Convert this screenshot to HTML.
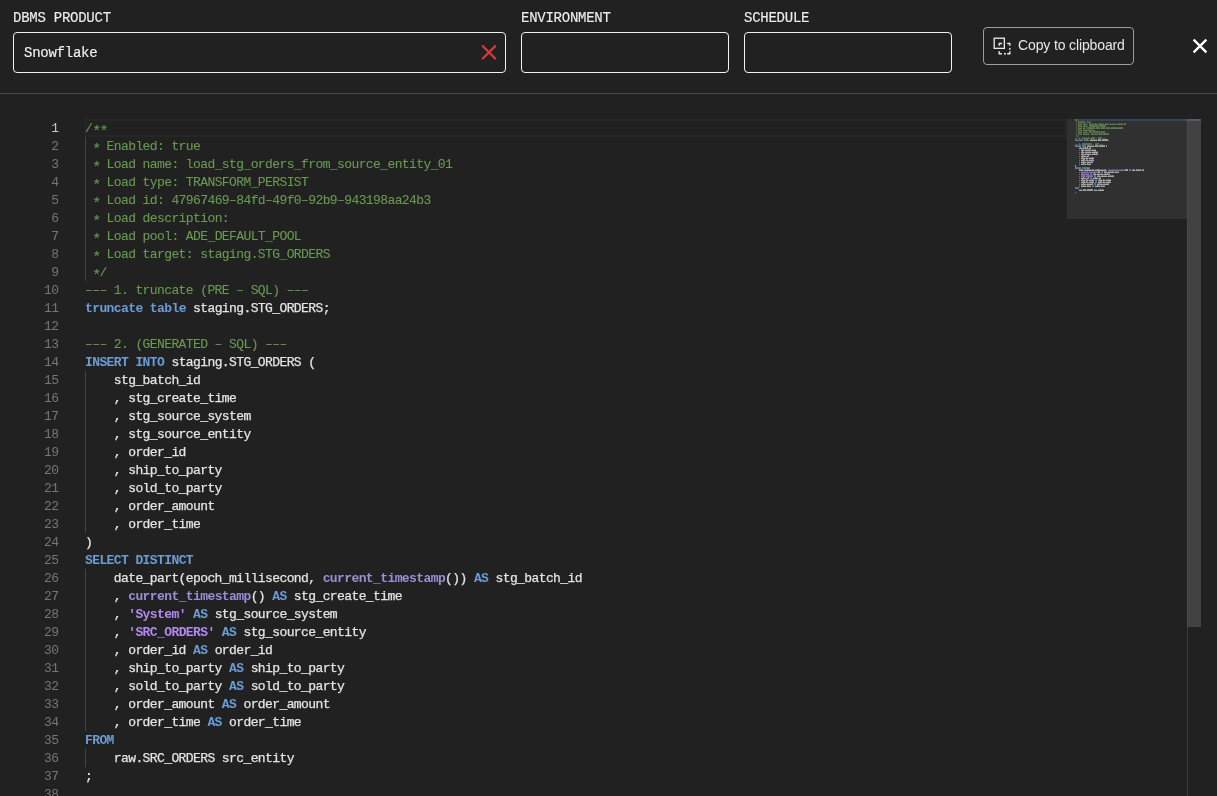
<!DOCTYPE html>
<html>
<head>
<meta charset="utf-8">
<style>
html,body{margin:0;padding:0;}
body{width:1217px;height:796px;overflow:hidden;background:#212121;position:relative;font-family:"Liberation Mono",monospace;}
.abs{position:absolute;}
.lbl{position:absolute;top:9px;font-size:14px;line-height:18px;color:#ececec;-webkit-text-stroke:0.15px currentColor;letter-spacing:-0.25px;white-space:pre;}
.inp{position:absolute;top:32px;height:41px;box-sizing:border-box;border:1.5px solid #f2f2f2;border-radius:4px;}
.val{position:absolute;left:24px;top:44px;font-size:14px;line-height:18px;color:#f2f2f2;-webkit-text-stroke:0.15px currentColor;white-space:pre;letter-spacing:-0.25px;}
.btn{position:absolute;left:983px;top:27px;width:151px;height:38px;box-sizing:border-box;border:1px solid #9d9d9d;border-radius:4px;}
.btxt{position:absolute;left:1018px;top:36px;font-family:"Liberation Sans",sans-serif;font-size:14px;line-height:18px;color:#e8e8e8;white-space:pre;letter-spacing:-0.13px;}
.sep{position:absolute;left:0;top:93px;width:1217px;height:1px;background:#4a4a4a;}
.ln{position:absolute;left:0;width:58.5px;text-align:right;font-size:13px;letter-spacing:-0.6px;line-height:18px;height:18px;color:#767676;}
.ln.cur{color:#c6c6c6;}
.cl{position:absolute;left:85px;-webkit-text-stroke:0.25px currentColor;font-size:13px;letter-spacing:-0.6px;line-height:18px;height:18px;white-space:pre;}
.c{color:#6a9955;-webkit-text-stroke:0.08px currentColor;}
.k{color:#6c9cd4;font-weight:bold;-webkit-text-stroke:0;}
.f{color:#9b8fd4;font-weight:bold;-webkit-text-stroke:0;}
.s{color:#b28af0;font-weight:bold;-webkit-text-stroke:0;}
.t{color:#e4e4e4;}
.ast{font-style:normal;font-size:15px;letter-spacing:-1.8px;position:relative;top:3.5px;line-height:0;}
.guide{position:absolute;left:85px;width:1px;background:#454545;}
.curline{position:absolute;left:85px;top:119px;width:982px;height:18px;box-sizing:border-box;border:2px solid #262626;}
.mmbg{position:absolute;left:1067px;top:119px;width:120px;height:100px;background:#303030;}
.mmcur{position:absolute;left:1075px;top:119px;width:112px;height:2px;background:#34455a;}
.sbline{position:absolute;left:1187px;top:119px;width:1px;height:677px;background:#3a3a3a;}
.sbedge{position:absolute;left:1187px;top:119px;width:1px;height:508px;background:#4a4a4a;}
.sbthumb{position:absolute;left:1188px;top:119px;width:13px;height:508px;background:#424242;}
.sbcur{position:absolute;left:1187px;top:119px;width:14px;height:2px;background:#5a5a5a;}
</style>
</head>
<body>
<div id="root" style="position:absolute;left:0;top:0;width:1217px;height:796px;will-change:transform">
<div class="lbl" style="left:13px">DBMS PRODUCT</div>
<div class="lbl" style="left:521px">ENVIRONMENT</div>
<div class="lbl" style="left:744px">SCHEDULE</div>
<div class="inp" style="left:13px;width:493px"></div>
<div class="val">Snowflake</div>
<svg class="abs" style="left:480px;top:44px" width="18" height="18" viewBox="0 0 18 18"><path d="M2.8 2.1L15.2 14.5M15.2 2.1L2.8 14.5" stroke="#d43b3b" stroke-width="2.2" stroke-linecap="round"/></svg>
<div class="inp" style="left:521px;width:208px"></div>
<div class="inp" style="left:744px;width:208px"></div>
<div class="btn"></div>
<svg class="abs" style="left:988px;top:32px" width="30" height="26" viewBox="0 0 30 26" fill="none" stroke="#ececec" stroke-width="1.4">
<rect x="6.2" y="6.2" width="10.15" height="10.15" stroke-width="1.3"/>
<path d="M11.2 13.8V11.5H14"/>
<path d="M19.2 11.5H21.8V13.8M21.8 16V17.7M21.8 19.2V21.8H19.2M17.9 21.8H16M13.8 21.8H11.2V19.2"/>
</svg>
<div class="btxt">Copy to clipboard</div>
<svg class="abs" style="left:1191px;top:37px" width="18" height="18" viewBox="0 0 18 18"><path d="M2.6 2.6L15.4 15.4M15.4 2.6L2.6 15.4" stroke="#ffffff" stroke-width="2.3"/></svg>
<div class="sep"></div>

<div class="curline"></div>
<div class="guide" style="top:137px;height:144px"></div><div class="guide" style="top:371px;height:162px"></div><div class="guide" style="top:569px;height:162px"></div><div class="guide" style="top:749px;height:18px"></div>
<div class="ln cur" style="top:120px">1</div>
<div class="ln" style="top:138px">2</div>
<div class="ln" style="top:156px">3</div>
<div class="ln" style="top:174px">4</div>
<div class="ln" style="top:192px">5</div>
<div class="ln" style="top:210px">6</div>
<div class="ln" style="top:228px">7</div>
<div class="ln" style="top:246px">8</div>
<div class="ln" style="top:264px">9</div>
<div class="ln" style="top:282px">10</div>
<div class="ln" style="top:300px">11</div>
<div class="ln" style="top:318px">12</div>
<div class="ln" style="top:336px">13</div>
<div class="ln" style="top:354px">14</div>
<div class="ln" style="top:372px">15</div>
<div class="ln" style="top:390px">16</div>
<div class="ln" style="top:408px">17</div>
<div class="ln" style="top:426px">18</div>
<div class="ln" style="top:444px">19</div>
<div class="ln" style="top:462px">20</div>
<div class="ln" style="top:480px">21</div>
<div class="ln" style="top:498px">22</div>
<div class="ln" style="top:516px">23</div>
<div class="ln" style="top:534px">24</div>
<div class="ln" style="top:552px">25</div>
<div class="ln" style="top:570px">26</div>
<div class="ln" style="top:588px">27</div>
<div class="ln" style="top:606px">28</div>
<div class="ln" style="top:624px">29</div>
<div class="ln" style="top:642px">30</div>
<div class="ln" style="top:660px">31</div>
<div class="ln" style="top:678px">32</div>
<div class="ln" style="top:696px">33</div>
<div class="ln" style="top:714px">34</div>
<div class="ln" style="top:732px">35</div>
<div class="ln" style="top:750px">36</div>
<div class="ln" style="top:768px">37</div>
<div class="ln" style="top:786px">38</div>
<div class="cl" style="top:120px"><span class="c">/<i class="ast">*</i><i class="ast">*</i></span></div>
<div class="cl" style="top:138px"><span class="c"> <i class="ast">*</i> Enabled: true</span></div>
<div class="cl" style="top:156px"><span class="c"> <i class="ast">*</i> Load name: load_stg_orders_from_source_entity_01</span></div>
<div class="cl" style="top:174px"><span class="c"> <i class="ast">*</i> Load type: TRANSFORM_PERSIST</span></div>
<div class="cl" style="top:192px"><span class="c"> <i class="ast">*</i> Load id: 47967469&#8211;84fd&#8211;49f0&#8211;92b9&#8211;943198aa24b3</span></div>
<div class="cl" style="top:210px"><span class="c"> <i class="ast">*</i> Load description:</span></div>
<div class="cl" style="top:228px"><span class="c"> <i class="ast">*</i> Load pool: ADE_DEFAULT_POOL</span></div>
<div class="cl" style="top:246px"><span class="c"> <i class="ast">*</i> Load target: staging.STG_ORDERS</span></div>
<div class="cl" style="top:264px"><span class="c"> <i class="ast">*</i>/</span></div>
<div class="cl" style="top:282px"><span class="c">&#8211;&#8211;&#8211; 1. truncate (PRE &#8211; SQL) &#8211;&#8211;&#8211;</span></div>
<div class="cl" style="top:300px"><span class="k">truncate</span><span class="t"> </span><span class="k">table</span><span class="t"> staging.STG_ORDERS;</span></div>
<div class="cl" style="top:318px"></div>
<div class="cl" style="top:336px"><span class="c">&#8211;&#8211;&#8211; 2. (GENERATED &#8211; SQL) &#8211;&#8211;&#8211;</span></div>
<div class="cl" style="top:354px"><span class="k">INSERT</span><span class="t"> </span><span class="k">INTO</span><span class="t"> staging.STG_ORDERS (</span></div>
<div class="cl" style="top:372px"><span class="t">    stg_batch_id</span></div>
<div class="cl" style="top:390px"><span class="t">    , stg_create_time</span></div>
<div class="cl" style="top:408px"><span class="t">    , stg_source_system</span></div>
<div class="cl" style="top:426px"><span class="t">    , stg_source_entity</span></div>
<div class="cl" style="top:444px"><span class="t">    , order_id</span></div>
<div class="cl" style="top:462px"><span class="t">    , ship_to_party</span></div>
<div class="cl" style="top:480px"><span class="t">    , sold_to_party</span></div>
<div class="cl" style="top:498px"><span class="t">    , order_amount</span></div>
<div class="cl" style="top:516px"><span class="t">    , order_time</span></div>
<div class="cl" style="top:534px"><span class="t">)</span></div>
<div class="cl" style="top:552px"><span class="k">SELECT</span><span class="t"> </span><span class="k">DISTINCT</span></div>
<div class="cl" style="top:570px"><span class="t">    date_part(epoch_millisecond, </span><span class="f">current_timestamp</span><span class="t">()) </span><span class="k">AS</span><span class="t"> stg_batch_id</span></div>
<div class="cl" style="top:588px"><span class="t">    , </span><span class="f">current_timestamp</span><span class="t">() </span><span class="k">AS</span><span class="t"> stg_create_time</span></div>
<div class="cl" style="top:606px"><span class="t">    , </span><span class="s">&#x27;System&#x27;</span><span class="t"> </span><span class="k">AS</span><span class="t"> stg_source_system</span></div>
<div class="cl" style="top:624px"><span class="t">    , </span><span class="s">&#x27;SRC_ORDERS&#x27;</span><span class="t"> </span><span class="k">AS</span><span class="t"> stg_source_entity</span></div>
<div class="cl" style="top:642px"><span class="t">    , order_id </span><span class="k">AS</span><span class="t"> order_id</span></div>
<div class="cl" style="top:660px"><span class="t">    , ship_to_party </span><span class="k">AS</span><span class="t"> ship_to_party</span></div>
<div class="cl" style="top:678px"><span class="t">    , sold_to_party </span><span class="k">AS</span><span class="t"> sold_to_party</span></div>
<div class="cl" style="top:696px"><span class="t">    , order_amount </span><span class="k">AS</span><span class="t"> order_amount</span></div>
<div class="cl" style="top:714px"><span class="t">    , order_time </span><span class="k">AS</span><span class="t"> order_time</span></div>
<div class="cl" style="top:732px"><span class="k">FROM</span></div>
<div class="cl" style="top:750px"><span class="t">    raw.SRC_ORDERS src_entity</span></div>
<div class="cl" style="top:768px"><span class="t">;</span></div>
<div class="cl" style="top:786px"></div>
<div class="mmbg"></div>
<div class="mmcur"></div>
<svg class="abs" style="left:0;top:0;opacity:0.8" shape-rendering="crispEdges" width="1217" height="796"><rect x="1075" y="119" width="1" height="1" fill="#6a9955" fill-opacity="0.75"/><rect x="1076" y="119" width="2" height="1" fill="#6a9955" fill-opacity="0.55"/><rect x="1076" y="121" width="1" height="1" fill="#6a9955" fill-opacity="0.55"/><rect x="1078" y="121" width="1" height="1" fill="#6a9955" fill-opacity="0.75"/><rect x="1079" y="121" width="2" height="1" fill="#6a9955" fill-opacity="0.35"/><rect x="1081" y="121" width="2" height="1" fill="#6a9955" fill-opacity="0.75"/><rect x="1083" y="121" width="1" height="1" fill="#6a9955" fill-opacity="0.35"/><rect x="1084" y="121" width="1" height="1" fill="#6a9955" fill-opacity="0.75"/><rect x="1087" y="121" width="1" height="1" fill="#6a9955" fill-opacity="0.75"/><rect x="1088" y="121" width="3" height="1" fill="#6a9955" fill-opacity="0.35"/><rect x="1076" y="123" width="1" height="1" fill="#6a9955" fill-opacity="0.55"/><rect x="1078" y="123" width="1" height="1" fill="#6a9955" fill-opacity="0.75"/><rect x="1079" y="123" width="2" height="1" fill="#6a9955" fill-opacity="0.35"/><rect x="1081" y="123" width="1" height="1" fill="#6a9955" fill-opacity="0.75"/><rect x="1083" y="123" width="4" height="1" fill="#6a9955" fill-opacity="0.35"/><rect x="1089" y="123" width="1" height="1" fill="#6a9955" fill-opacity="0.75"/><rect x="1090" y="123" width="2" height="1" fill="#6a9955" fill-opacity="0.35"/><rect x="1092" y="123" width="1" height="1" fill="#6a9955" fill-opacity="0.75"/><rect x="1094" y="123" width="1" height="1" fill="#6a9955" fill-opacity="0.35"/><rect x="1095" y="123" width="1" height="1" fill="#6a9955" fill-opacity="0.75"/><rect x="1096" y="123" width="1" height="1" fill="#6a9955" fill-opacity="0.35"/><rect x="1098" y="123" width="2" height="1" fill="#6a9955" fill-opacity="0.35"/><rect x="1100" y="123" width="1" height="1" fill="#6a9955" fill-opacity="0.75"/><rect x="1101" y="123" width="3" height="1" fill="#6a9955" fill-opacity="0.35"/><rect x="1105" y="123" width="1" height="1" fill="#6a9955" fill-opacity="0.75"/><rect x="1106" y="123" width="3" height="1" fill="#6a9955" fill-opacity="0.35"/><rect x="1110" y="123" width="6" height="1" fill="#6a9955" fill-opacity="0.35"/><rect x="1117" y="123" width="2" height="1" fill="#6a9955" fill-opacity="0.35"/><rect x="1119" y="123" width="1" height="1" fill="#6a9955" fill-opacity="0.75"/><rect x="1120" y="123" width="1" height="1" fill="#6a9955" fill-opacity="0.35"/><rect x="1121" y="123" width="1" height="1" fill="#6a9955" fill-opacity="0.75"/><rect x="1122" y="123" width="1" height="1" fill="#6a9955" fill-opacity="0.35"/><rect x="1124" y="123" width="2" height="1" fill="#6a9955" fill-opacity="0.75"/><rect x="1076" y="125" width="1" height="1" fill="#6a9955" fill-opacity="0.55"/><rect x="1078" y="125" width="1" height="1" fill="#6a9955" fill-opacity="0.75"/><rect x="1079" y="125" width="2" height="1" fill="#6a9955" fill-opacity="0.35"/><rect x="1081" y="125" width="1" height="1" fill="#6a9955" fill-opacity="0.75"/><rect x="1083" y="125" width="1" height="1" fill="#6a9955" fill-opacity="0.75"/><rect x="1084" y="125" width="3" height="1" fill="#6a9955" fill-opacity="0.35"/><rect x="1089" y="125" width="9" height="1" fill="#6a9955" fill-opacity="0.75"/><rect x="1099" y="125" width="7" height="1" fill="#6a9955" fill-opacity="0.75"/><rect x="1076" y="127" width="1" height="1" fill="#6a9955" fill-opacity="0.55"/><rect x="1078" y="127" width="1" height="1" fill="#6a9955" fill-opacity="0.75"/><rect x="1079" y="127" width="2" height="1" fill="#6a9955" fill-opacity="0.35"/><rect x="1081" y="127" width="1" height="1" fill="#6a9955" fill-opacity="0.75"/><rect x="1083" y="127" width="1" height="1" fill="#6a9955" fill-opacity="0.35"/><rect x="1084" y="127" width="1" height="1" fill="#6a9955" fill-opacity="0.75"/><rect x="1087" y="127" width="8" height="1" fill="#6a9955" fill-opacity="0.75"/><rect x="1096" y="127" width="4" height="1" fill="#6a9955" fill-opacity="0.75"/><rect x="1101" y="127" width="4" height="1" fill="#6a9955" fill-opacity="0.75"/><rect x="1106" y="127" width="4" height="1" fill="#6a9955" fill-opacity="0.75"/><rect x="1111" y="127" width="6" height="1" fill="#6a9955" fill-opacity="0.75"/><rect x="1117" y="127" width="2" height="1" fill="#6a9955" fill-opacity="0.35"/><rect x="1119" y="127" width="4" height="1" fill="#6a9955" fill-opacity="0.75"/><rect x="1076" y="129" width="1" height="1" fill="#6a9955" fill-opacity="0.55"/><rect x="1078" y="129" width="1" height="1" fill="#6a9955" fill-opacity="0.75"/><rect x="1079" y="129" width="2" height="1" fill="#6a9955" fill-opacity="0.35"/><rect x="1081" y="129" width="1" height="1" fill="#6a9955" fill-opacity="0.75"/><rect x="1083" y="129" width="1" height="1" fill="#6a9955" fill-opacity="0.75"/><rect x="1084" y="129" width="6" height="1" fill="#6a9955" fill-opacity="0.35"/><rect x="1090" y="129" width="1" height="1" fill="#6a9955" fill-opacity="0.75"/><rect x="1091" y="129" width="3" height="1" fill="#6a9955" fill-opacity="0.35"/><rect x="1076" y="131" width="1" height="1" fill="#6a9955" fill-opacity="0.55"/><rect x="1078" y="131" width="1" height="1" fill="#6a9955" fill-opacity="0.75"/><rect x="1079" y="131" width="2" height="1" fill="#6a9955" fill-opacity="0.35"/><rect x="1081" y="131" width="1" height="1" fill="#6a9955" fill-opacity="0.75"/><rect x="1083" y="131" width="3" height="1" fill="#6a9955" fill-opacity="0.35"/><rect x="1086" y="131" width="1" height="1" fill="#6a9955" fill-opacity="0.75"/><rect x="1089" y="131" width="3" height="1" fill="#6a9955" fill-opacity="0.75"/><rect x="1093" y="131" width="7" height="1" fill="#6a9955" fill-opacity="0.75"/><rect x="1101" y="131" width="4" height="1" fill="#6a9955" fill-opacity="0.75"/><rect x="1076" y="133" width="1" height="1" fill="#6a9955" fill-opacity="0.55"/><rect x="1078" y="133" width="1" height="1" fill="#6a9955" fill-opacity="0.75"/><rect x="1079" y="133" width="2" height="1" fill="#6a9955" fill-opacity="0.35"/><rect x="1081" y="133" width="1" height="1" fill="#6a9955" fill-opacity="0.75"/><rect x="1083" y="133" width="1" height="1" fill="#6a9955" fill-opacity="0.75"/><rect x="1084" y="133" width="4" height="1" fill="#6a9955" fill-opacity="0.35"/><rect x="1088" y="133" width="1" height="1" fill="#6a9955" fill-opacity="0.75"/><rect x="1091" y="133" width="1" height="1" fill="#6a9955" fill-opacity="0.35"/><rect x="1092" y="133" width="1" height="1" fill="#6a9955" fill-opacity="0.75"/><rect x="1093" y="133" width="5" height="1" fill="#6a9955" fill-opacity="0.35"/><rect x="1099" y="133" width="3" height="1" fill="#6a9955" fill-opacity="0.75"/><rect x="1103" y="133" width="6" height="1" fill="#6a9955" fill-opacity="0.75"/><rect x="1076" y="135" width="1" height="1" fill="#6a9955" fill-opacity="0.55"/><rect x="1077" y="135" width="1" height="1" fill="#6a9955" fill-opacity="0.75"/><rect x="1079" y="137" width="1" height="1" fill="#6a9955" fill-opacity="0.75"/><rect x="1082" y="137" width="1" height="1" fill="#6a9955" fill-opacity="0.75"/><rect x="1083" y="137" width="5" height="1" fill="#6a9955" fill-opacity="0.35"/><rect x="1088" y="137" width="1" height="1" fill="#6a9955" fill-opacity="0.75"/><rect x="1089" y="137" width="1" height="1" fill="#6a9955" fill-opacity="0.35"/><rect x="1091" y="137" width="4" height="1" fill="#6a9955" fill-opacity="0.75"/><rect x="1098" y="137" width="4" height="1" fill="#6a9955" fill-opacity="0.75"/><rect x="1075" y="139" width="1" height="1" fill="#6c9cd4" fill-opacity="0.75"/><rect x="1076" y="139" width="5" height="1" fill="#6c9cd4" fill-opacity="0.35"/><rect x="1081" y="139" width="1" height="1" fill="#6c9cd4" fill-opacity="0.75"/><rect x="1082" y="139" width="1" height="1" fill="#6c9cd4" fill-opacity="0.35"/><rect x="1084" y="139" width="1" height="1" fill="#6c9cd4" fill-opacity="0.75"/><rect x="1085" y="139" width="1" height="1" fill="#6c9cd4" fill-opacity="0.35"/><rect x="1086" y="139" width="2" height="1" fill="#6c9cd4" fill-opacity="0.75"/><rect x="1088" y="139" width="1" height="1" fill="#6c9cd4" fill-opacity="0.35"/><rect x="1090" y="139" width="1" height="1" fill="#d4d4d4" fill-opacity="0.35"/><rect x="1091" y="139" width="1" height="1" fill="#d4d4d4" fill-opacity="0.75"/><rect x="1092" y="139" width="5" height="1" fill="#d4d4d4" fill-opacity="0.35"/><rect x="1098" y="139" width="3" height="1" fill="#d4d4d4" fill-opacity="0.75"/><rect x="1102" y="139" width="6" height="1" fill="#d4d4d4" fill-opacity="0.75"/><rect x="1079" y="143" width="1" height="1" fill="#6a9955" fill-opacity="0.75"/><rect x="1082" y="143" width="10" height="1" fill="#6a9955" fill-opacity="0.75"/><rect x="1095" y="143" width="4" height="1" fill="#6a9955" fill-opacity="0.75"/><rect x="1075" y="145" width="6" height="1" fill="#6c9cd4" fill-opacity="0.75"/><rect x="1082" y="145" width="4" height="1" fill="#6c9cd4" fill-opacity="0.75"/><rect x="1087" y="145" width="1" height="1" fill="#d4d4d4" fill-opacity="0.35"/><rect x="1088" y="145" width="1" height="1" fill="#d4d4d4" fill-opacity="0.75"/><rect x="1089" y="145" width="5" height="1" fill="#d4d4d4" fill-opacity="0.35"/><rect x="1095" y="145" width="3" height="1" fill="#d4d4d4" fill-opacity="0.75"/><rect x="1099" y="145" width="6" height="1" fill="#d4d4d4" fill-opacity="0.75"/><rect x="1106" y="145" width="1" height="1" fill="#d4d4d4" fill-opacity="0.75"/><rect x="1079" y="147" width="1" height="1" fill="#d4d4d4" fill-opacity="0.35"/><rect x="1080" y="147" width="1" height="1" fill="#d4d4d4" fill-opacity="0.75"/><rect x="1081" y="147" width="1" height="1" fill="#d4d4d4" fill-opacity="0.35"/><rect x="1083" y="147" width="1" height="1" fill="#d4d4d4" fill-opacity="0.75"/><rect x="1084" y="147" width="1" height="1" fill="#d4d4d4" fill-opacity="0.35"/><rect x="1085" y="147" width="1" height="1" fill="#d4d4d4" fill-opacity="0.75"/><rect x="1086" y="147" width="1" height="1" fill="#d4d4d4" fill-opacity="0.35"/><rect x="1087" y="147" width="1" height="1" fill="#d4d4d4" fill-opacity="0.75"/><rect x="1089" y="147" width="1" height="1" fill="#d4d4d4" fill-opacity="0.35"/><rect x="1090" y="147" width="1" height="1" fill="#d4d4d4" fill-opacity="0.75"/><rect x="1081" y="149" width="1" height="1" fill="#d4d4d4" fill-opacity="0.35"/><rect x="1082" y="149" width="1" height="1" fill="#d4d4d4" fill-opacity="0.75"/><rect x="1083" y="149" width="1" height="1" fill="#d4d4d4" fill-opacity="0.35"/><rect x="1085" y="149" width="4" height="1" fill="#d4d4d4" fill-opacity="0.35"/><rect x="1089" y="149" width="1" height="1" fill="#d4d4d4" fill-opacity="0.75"/><rect x="1090" y="149" width="1" height="1" fill="#d4d4d4" fill-opacity="0.35"/><rect x="1092" y="149" width="1" height="1" fill="#d4d4d4" fill-opacity="0.75"/><rect x="1093" y="149" width="3" height="1" fill="#d4d4d4" fill-opacity="0.35"/><rect x="1081" y="151" width="1" height="1" fill="#d4d4d4" fill-opacity="0.35"/><rect x="1082" y="151" width="1" height="1" fill="#d4d4d4" fill-opacity="0.75"/><rect x="1083" y="151" width="1" height="1" fill="#d4d4d4" fill-opacity="0.35"/><rect x="1085" y="151" width="6" height="1" fill="#d4d4d4" fill-opacity="0.35"/><rect x="1092" y="151" width="3" height="1" fill="#d4d4d4" fill-opacity="0.35"/><rect x="1095" y="151" width="1" height="1" fill="#d4d4d4" fill-opacity="0.75"/><rect x="1096" y="151" width="2" height="1" fill="#d4d4d4" fill-opacity="0.35"/><rect x="1081" y="153" width="1" height="1" fill="#d4d4d4" fill-opacity="0.35"/><rect x="1082" y="153" width="1" height="1" fill="#d4d4d4" fill-opacity="0.75"/><rect x="1083" y="153" width="1" height="1" fill="#d4d4d4" fill-opacity="0.35"/><rect x="1085" y="153" width="6" height="1" fill="#d4d4d4" fill-opacity="0.35"/><rect x="1092" y="153" width="2" height="1" fill="#d4d4d4" fill-opacity="0.35"/><rect x="1094" y="153" width="1" height="1" fill="#d4d4d4" fill-opacity="0.75"/><rect x="1095" y="153" width="1" height="1" fill="#d4d4d4" fill-opacity="0.35"/><rect x="1096" y="153" width="1" height="1" fill="#d4d4d4" fill-opacity="0.75"/><rect x="1097" y="153" width="1" height="1" fill="#d4d4d4" fill-opacity="0.35"/><rect x="1081" y="155" width="2" height="1" fill="#d4d4d4" fill-opacity="0.35"/><rect x="1083" y="155" width="1" height="1" fill="#d4d4d4" fill-opacity="0.75"/><rect x="1084" y="155" width="2" height="1" fill="#d4d4d4" fill-opacity="0.35"/><rect x="1087" y="155" width="1" height="1" fill="#d4d4d4" fill-opacity="0.35"/><rect x="1088" y="155" width="1" height="1" fill="#d4d4d4" fill-opacity="0.75"/><rect x="1081" y="157" width="1" height="1" fill="#d4d4d4" fill-opacity="0.35"/><rect x="1082" y="157" width="1" height="1" fill="#d4d4d4" fill-opacity="0.75"/><rect x="1083" y="157" width="2" height="1" fill="#d4d4d4" fill-opacity="0.35"/><rect x="1086" y="157" width="1" height="1" fill="#d4d4d4" fill-opacity="0.75"/><rect x="1087" y="157" width="1" height="1" fill="#d4d4d4" fill-opacity="0.35"/><rect x="1089" y="157" width="3" height="1" fill="#d4d4d4" fill-opacity="0.35"/><rect x="1092" y="157" width="1" height="1" fill="#d4d4d4" fill-opacity="0.75"/><rect x="1093" y="157" width="1" height="1" fill="#d4d4d4" fill-opacity="0.35"/><rect x="1081" y="159" width="2" height="1" fill="#d4d4d4" fill-opacity="0.35"/><rect x="1083" y="159" width="2" height="1" fill="#d4d4d4" fill-opacity="0.75"/><rect x="1086" y="159" width="1" height="1" fill="#d4d4d4" fill-opacity="0.75"/><rect x="1087" y="159" width="1" height="1" fill="#d4d4d4" fill-opacity="0.35"/><rect x="1089" y="159" width="3" height="1" fill="#d4d4d4" fill-opacity="0.35"/><rect x="1092" y="159" width="1" height="1" fill="#d4d4d4" fill-opacity="0.75"/><rect x="1093" y="159" width="1" height="1" fill="#d4d4d4" fill-opacity="0.35"/><rect x="1081" y="161" width="2" height="1" fill="#d4d4d4" fill-opacity="0.35"/><rect x="1083" y="161" width="1" height="1" fill="#d4d4d4" fill-opacity="0.75"/><rect x="1084" y="161" width="2" height="1" fill="#d4d4d4" fill-opacity="0.35"/><rect x="1087" y="161" width="5" height="1" fill="#d4d4d4" fill-opacity="0.35"/><rect x="1092" y="161" width="1" height="1" fill="#d4d4d4" fill-opacity="0.75"/><rect x="1081" y="163" width="2" height="1" fill="#d4d4d4" fill-opacity="0.35"/><rect x="1083" y="163" width="1" height="1" fill="#d4d4d4" fill-opacity="0.75"/><rect x="1084" y="163" width="2" height="1" fill="#d4d4d4" fill-opacity="0.35"/><rect x="1087" y="163" width="1" height="1" fill="#d4d4d4" fill-opacity="0.75"/><rect x="1088" y="163" width="3" height="1" fill="#d4d4d4" fill-opacity="0.35"/><rect x="1075" y="165" width="1" height="1" fill="#d4d4d4" fill-opacity="0.75"/><rect x="1075" y="167" width="6" height="1" fill="#6c9cd4" fill-opacity="0.75"/><rect x="1082" y="167" width="8" height="1" fill="#6c9cd4" fill-opacity="0.75"/><rect x="1079" y="169" width="1" height="1" fill="#d4d4d4" fill-opacity="0.75"/><rect x="1080" y="169" width="1" height="1" fill="#d4d4d4" fill-opacity="0.35"/><rect x="1081" y="169" width="1" height="1" fill="#d4d4d4" fill-opacity="0.75"/><rect x="1082" y="169" width="1" height="1" fill="#d4d4d4" fill-opacity="0.35"/><rect x="1084" y="169" width="3" height="1" fill="#d4d4d4" fill-opacity="0.35"/><rect x="1087" y="169" width="2" height="1" fill="#d4d4d4" fill-opacity="0.75"/><rect x="1089" y="169" width="4" height="1" fill="#d4d4d4" fill-opacity="0.35"/><rect x="1093" y="169" width="1" height="1" fill="#d4d4d4" fill-opacity="0.75"/><rect x="1095" y="169" width="2" height="1" fill="#d4d4d4" fill-opacity="0.35"/><rect x="1097" y="169" width="2" height="1" fill="#d4d4d4" fill-opacity="0.75"/><rect x="1099" y="169" width="6" height="1" fill="#d4d4d4" fill-opacity="0.35"/><rect x="1105" y="169" width="1" height="1" fill="#d4d4d4" fill-opacity="0.75"/><rect x="1108" y="169" width="6" height="1" fill="#9b8fd4" fill-opacity="0.35"/><rect x="1114" y="169" width="1" height="1" fill="#9b8fd4" fill-opacity="0.75"/><rect x="1116" y="169" width="1" height="1" fill="#9b8fd4" fill-opacity="0.75"/><rect x="1117" y="169" width="4" height="1" fill="#9b8fd4" fill-opacity="0.35"/><rect x="1121" y="169" width="1" height="1" fill="#9b8fd4" fill-opacity="0.75"/><rect x="1122" y="169" width="3" height="1" fill="#9b8fd4" fill-opacity="0.35"/><rect x="1125" y="169" width="3" height="1" fill="#d4d4d4" fill-opacity="0.75"/><rect x="1129" y="169" width="2" height="1" fill="#6c9cd4" fill-opacity="0.75"/><rect x="1132" y="169" width="1" height="1" fill="#d4d4d4" fill-opacity="0.35"/><rect x="1133" y="169" width="1" height="1" fill="#d4d4d4" fill-opacity="0.75"/><rect x="1134" y="169" width="1" height="1" fill="#d4d4d4" fill-opacity="0.35"/><rect x="1136" y="169" width="1" height="1" fill="#d4d4d4" fill-opacity="0.75"/><rect x="1137" y="169" width="1" height="1" fill="#d4d4d4" fill-opacity="0.35"/><rect x="1138" y="169" width="1" height="1" fill="#d4d4d4" fill-opacity="0.75"/><rect x="1139" y="169" width="1" height="1" fill="#d4d4d4" fill-opacity="0.35"/><rect x="1140" y="169" width="1" height="1" fill="#d4d4d4" fill-opacity="0.75"/><rect x="1142" y="169" width="1" height="1" fill="#d4d4d4" fill-opacity="0.35"/><rect x="1143" y="169" width="1" height="1" fill="#d4d4d4" fill-opacity="0.75"/><rect x="1081" y="171" width="6" height="1" fill="#9b8fd4" fill-opacity="0.35"/><rect x="1087" y="171" width="1" height="1" fill="#9b8fd4" fill-opacity="0.75"/><rect x="1089" y="171" width="1" height="1" fill="#9b8fd4" fill-opacity="0.75"/><rect x="1090" y="171" width="4" height="1" fill="#9b8fd4" fill-opacity="0.35"/><rect x="1094" y="171" width="1" height="1" fill="#9b8fd4" fill-opacity="0.75"/><rect x="1095" y="171" width="3" height="1" fill="#9b8fd4" fill-opacity="0.35"/><rect x="1098" y="171" width="2" height="1" fill="#d4d4d4" fill-opacity="0.75"/><rect x="1101" y="171" width="2" height="1" fill="#6c9cd4" fill-opacity="0.75"/><rect x="1104" y="171" width="1" height="1" fill="#d4d4d4" fill-opacity="0.35"/><rect x="1105" y="171" width="1" height="1" fill="#d4d4d4" fill-opacity="0.75"/><rect x="1106" y="171" width="1" height="1" fill="#d4d4d4" fill-opacity="0.35"/><rect x="1108" y="171" width="4" height="1" fill="#d4d4d4" fill-opacity="0.35"/><rect x="1112" y="171" width="1" height="1" fill="#d4d4d4" fill-opacity="0.75"/><rect x="1113" y="171" width="1" height="1" fill="#d4d4d4" fill-opacity="0.35"/><rect x="1115" y="171" width="1" height="1" fill="#d4d4d4" fill-opacity="0.75"/><rect x="1116" y="171" width="3" height="1" fill="#d4d4d4" fill-opacity="0.35"/><rect x="1081" y="173" width="2" height="1" fill="#b28af0" fill-opacity="0.75"/><rect x="1083" y="173" width="2" height="1" fill="#b28af0" fill-opacity="0.35"/><rect x="1085" y="173" width="1" height="1" fill="#b28af0" fill-opacity="0.75"/><rect x="1086" y="173" width="2" height="1" fill="#b28af0" fill-opacity="0.35"/><rect x="1088" y="173" width="1" height="1" fill="#b28af0" fill-opacity="0.75"/><rect x="1090" y="173" width="2" height="1" fill="#6c9cd4" fill-opacity="0.75"/><rect x="1093" y="173" width="1" height="1" fill="#d4d4d4" fill-opacity="0.35"/><rect x="1094" y="173" width="1" height="1" fill="#d4d4d4" fill-opacity="0.75"/><rect x="1095" y="173" width="1" height="1" fill="#d4d4d4" fill-opacity="0.35"/><rect x="1097" y="173" width="6" height="1" fill="#d4d4d4" fill-opacity="0.35"/><rect x="1104" y="173" width="3" height="1" fill="#d4d4d4" fill-opacity="0.35"/><rect x="1107" y="173" width="1" height="1" fill="#d4d4d4" fill-opacity="0.75"/><rect x="1108" y="173" width="2" height="1" fill="#d4d4d4" fill-opacity="0.35"/><rect x="1081" y="175" width="4" height="1" fill="#b28af0" fill-opacity="0.75"/><rect x="1086" y="175" width="7" height="1" fill="#b28af0" fill-opacity="0.75"/><rect x="1094" y="175" width="2" height="1" fill="#6c9cd4" fill-opacity="0.75"/><rect x="1097" y="175" width="1" height="1" fill="#d4d4d4" fill-opacity="0.35"/><rect x="1098" y="175" width="1" height="1" fill="#d4d4d4" fill-opacity="0.75"/><rect x="1099" y="175" width="1" height="1" fill="#d4d4d4" fill-opacity="0.35"/><rect x="1101" y="175" width="6" height="1" fill="#d4d4d4" fill-opacity="0.35"/><rect x="1108" y="175" width="2" height="1" fill="#d4d4d4" fill-opacity="0.35"/><rect x="1110" y="175" width="1" height="1" fill="#d4d4d4" fill-opacity="0.75"/><rect x="1111" y="175" width="1" height="1" fill="#d4d4d4" fill-opacity="0.35"/><rect x="1112" y="175" width="1" height="1" fill="#d4d4d4" fill-opacity="0.75"/><rect x="1113" y="175" width="1" height="1" fill="#d4d4d4" fill-opacity="0.35"/><rect x="1081" y="177" width="2" height="1" fill="#d4d4d4" fill-opacity="0.35"/><rect x="1083" y="177" width="1" height="1" fill="#d4d4d4" fill-opacity="0.75"/><rect x="1084" y="177" width="2" height="1" fill="#d4d4d4" fill-opacity="0.35"/><rect x="1087" y="177" width="1" height="1" fill="#d4d4d4" fill-opacity="0.35"/><rect x="1088" y="177" width="1" height="1" fill="#d4d4d4" fill-opacity="0.75"/><rect x="1090" y="177" width="2" height="1" fill="#6c9cd4" fill-opacity="0.75"/><rect x="1093" y="177" width="2" height="1" fill="#d4d4d4" fill-opacity="0.35"/><rect x="1095" y="177" width="1" height="1" fill="#d4d4d4" fill-opacity="0.75"/><rect x="1096" y="177" width="2" height="1" fill="#d4d4d4" fill-opacity="0.35"/><rect x="1099" y="177" width="1" height="1" fill="#d4d4d4" fill-opacity="0.35"/><rect x="1100" y="177" width="1" height="1" fill="#d4d4d4" fill-opacity="0.75"/><rect x="1081" y="179" width="1" height="1" fill="#d4d4d4" fill-opacity="0.35"/><rect x="1082" y="179" width="1" height="1" fill="#d4d4d4" fill-opacity="0.75"/><rect x="1083" y="179" width="2" height="1" fill="#d4d4d4" fill-opacity="0.35"/><rect x="1086" y="179" width="1" height="1" fill="#d4d4d4" fill-opacity="0.75"/><rect x="1087" y="179" width="1" height="1" fill="#d4d4d4" fill-opacity="0.35"/><rect x="1089" y="179" width="3" height="1" fill="#d4d4d4" fill-opacity="0.35"/><rect x="1092" y="179" width="1" height="1" fill="#d4d4d4" fill-opacity="0.75"/><rect x="1093" y="179" width="1" height="1" fill="#d4d4d4" fill-opacity="0.35"/><rect x="1095" y="179" width="2" height="1" fill="#6c9cd4" fill-opacity="0.75"/><rect x="1098" y="179" width="1" height="1" fill="#d4d4d4" fill-opacity="0.35"/><rect x="1099" y="179" width="1" height="1" fill="#d4d4d4" fill-opacity="0.75"/><rect x="1100" y="179" width="2" height="1" fill="#d4d4d4" fill-opacity="0.35"/><rect x="1103" y="179" width="1" height="1" fill="#d4d4d4" fill-opacity="0.75"/><rect x="1104" y="179" width="1" height="1" fill="#d4d4d4" fill-opacity="0.35"/><rect x="1106" y="179" width="3" height="1" fill="#d4d4d4" fill-opacity="0.35"/><rect x="1109" y="179" width="1" height="1" fill="#d4d4d4" fill-opacity="0.75"/><rect x="1110" y="179" width="1" height="1" fill="#d4d4d4" fill-opacity="0.35"/><rect x="1081" y="181" width="2" height="1" fill="#d4d4d4" fill-opacity="0.35"/><rect x="1083" y="181" width="2" height="1" fill="#d4d4d4" fill-opacity="0.75"/><rect x="1086" y="181" width="1" height="1" fill="#d4d4d4" fill-opacity="0.75"/><rect x="1087" y="181" width="1" height="1" fill="#d4d4d4" fill-opacity="0.35"/><rect x="1089" y="181" width="3" height="1" fill="#d4d4d4" fill-opacity="0.35"/><rect x="1092" y="181" width="1" height="1" fill="#d4d4d4" fill-opacity="0.75"/><rect x="1093" y="181" width="1" height="1" fill="#d4d4d4" fill-opacity="0.35"/><rect x="1095" y="181" width="2" height="1" fill="#6c9cd4" fill-opacity="0.75"/><rect x="1098" y="181" width="2" height="1" fill="#d4d4d4" fill-opacity="0.35"/><rect x="1100" y="181" width="2" height="1" fill="#d4d4d4" fill-opacity="0.75"/><rect x="1103" y="181" width="1" height="1" fill="#d4d4d4" fill-opacity="0.75"/><rect x="1104" y="181" width="1" height="1" fill="#d4d4d4" fill-opacity="0.35"/><rect x="1106" y="181" width="3" height="1" fill="#d4d4d4" fill-opacity="0.35"/><rect x="1109" y="181" width="1" height="1" fill="#d4d4d4" fill-opacity="0.75"/><rect x="1110" y="181" width="1" height="1" fill="#d4d4d4" fill-opacity="0.35"/><rect x="1081" y="183" width="2" height="1" fill="#d4d4d4" fill-opacity="0.35"/><rect x="1083" y="183" width="1" height="1" fill="#d4d4d4" fill-opacity="0.75"/><rect x="1084" y="183" width="2" height="1" fill="#d4d4d4" fill-opacity="0.35"/><rect x="1087" y="183" width="5" height="1" fill="#d4d4d4" fill-opacity="0.35"/><rect x="1092" y="183" width="1" height="1" fill="#d4d4d4" fill-opacity="0.75"/><rect x="1094" y="183" width="2" height="1" fill="#6c9cd4" fill-opacity="0.75"/><rect x="1097" y="183" width="2" height="1" fill="#d4d4d4" fill-opacity="0.35"/><rect x="1099" y="183" width="1" height="1" fill="#d4d4d4" fill-opacity="0.75"/><rect x="1100" y="183" width="2" height="1" fill="#d4d4d4" fill-opacity="0.35"/><rect x="1103" y="183" width="5" height="1" fill="#d4d4d4" fill-opacity="0.35"/><rect x="1108" y="183" width="1" height="1" fill="#d4d4d4" fill-opacity="0.75"/><rect x="1081" y="185" width="2" height="1" fill="#d4d4d4" fill-opacity="0.35"/><rect x="1083" y="185" width="1" height="1" fill="#d4d4d4" fill-opacity="0.75"/><rect x="1084" y="185" width="2" height="1" fill="#d4d4d4" fill-opacity="0.35"/><rect x="1087" y="185" width="1" height="1" fill="#d4d4d4" fill-opacity="0.75"/><rect x="1088" y="185" width="3" height="1" fill="#d4d4d4" fill-opacity="0.35"/><rect x="1092" y="185" width="2" height="1" fill="#6c9cd4" fill-opacity="0.75"/><rect x="1095" y="185" width="2" height="1" fill="#d4d4d4" fill-opacity="0.35"/><rect x="1097" y="185" width="1" height="1" fill="#d4d4d4" fill-opacity="0.75"/><rect x="1098" y="185" width="2" height="1" fill="#d4d4d4" fill-opacity="0.35"/><rect x="1101" y="185" width="1" height="1" fill="#d4d4d4" fill-opacity="0.75"/><rect x="1102" y="185" width="3" height="1" fill="#d4d4d4" fill-opacity="0.35"/><rect x="1075" y="187" width="4" height="1" fill="#6c9cd4" fill-opacity="0.75"/><rect x="1079" y="189" width="3" height="1" fill="#d4d4d4" fill-opacity="0.35"/><rect x="1083" y="189" width="3" height="1" fill="#d4d4d4" fill-opacity="0.75"/><rect x="1087" y="189" width="6" height="1" fill="#d4d4d4" fill-opacity="0.75"/><rect x="1094" y="189" width="3" height="1" fill="#d4d4d4" fill-opacity="0.35"/><rect x="1098" y="189" width="2" height="1" fill="#d4d4d4" fill-opacity="0.35"/><rect x="1100" y="189" width="1" height="1" fill="#d4d4d4" fill-opacity="0.75"/><rect x="1101" y="189" width="1" height="1" fill="#d4d4d4" fill-opacity="0.35"/><rect x="1102" y="189" width="1" height="1" fill="#d4d4d4" fill-opacity="0.75"/><rect x="1103" y="189" width="1" height="1" fill="#d4d4d4" fill-opacity="0.35"/><rect x="1075" y="120" width="1" height="1" fill="#6a9955" fill-opacity="0.85"/><rect x="1076" y="120" width="2" height="1" fill="#6a9955" fill-opacity="0.45"/><rect x="1076" y="122" width="1" height="1" fill="#6a9955" fill-opacity="0.45"/><rect x="1078" y="122" width="1" height="1" fill="#6a9955" fill-opacity="0.85"/><rect x="1079" y="122" width="2" height="1" fill="#6a9955" fill-opacity="0.9"/><rect x="1081" y="122" width="2" height="1" fill="#6a9955" fill-opacity="0.85"/><rect x="1083" y="122" width="1" height="1" fill="#6a9955" fill-opacity="0.9"/><rect x="1084" y="122" width="1" height="1" fill="#6a9955" fill-opacity="0.85"/><rect x="1085" y="122" width="1" height="1" fill="#6a9955" fill-opacity="0.55"/><rect x="1087" y="122" width="1" height="1" fill="#6a9955" fill-opacity="0.85"/><rect x="1088" y="122" width="3" height="1" fill="#6a9955" fill-opacity="0.9"/><rect x="1076" y="124" width="1" height="1" fill="#6a9955" fill-opacity="0.45"/><rect x="1078" y="124" width="1" height="1" fill="#6a9955" fill-opacity="0.85"/><rect x="1079" y="124" width="2" height="1" fill="#6a9955" fill-opacity="0.9"/><rect x="1081" y="124" width="1" height="1" fill="#6a9955" fill-opacity="0.85"/><rect x="1083" y="124" width="4" height="1" fill="#6a9955" fill-opacity="0.9"/><rect x="1087" y="124" width="1" height="1" fill="#6a9955" fill-opacity="0.55"/><rect x="1089" y="124" width="1" height="1" fill="#6a9955" fill-opacity="0.85"/><rect x="1090" y="124" width="2" height="1" fill="#6a9955" fill-opacity="0.9"/><rect x="1092" y="124" width="1" height="1" fill="#6a9955" fill-opacity="0.85"/><rect x="1093" y="124" width="1" height="1" fill="#6a9955" fill-opacity="0.55"/><rect x="1094" y="124" width="1" height="1" fill="#6a9955" fill-opacity="0.9"/><rect x="1095" y="124" width="1" height="1" fill="#6a9955" fill-opacity="0.85"/><rect x="1096" y="124" width="1" height="1" fill="#6a9955" fill-opacity="0.9"/><rect x="1097" y="124" width="1" height="1" fill="#6a9955" fill-opacity="0.55"/><rect x="1098" y="124" width="2" height="1" fill="#6a9955" fill-opacity="0.9"/><rect x="1100" y="124" width="1" height="1" fill="#6a9955" fill-opacity="0.85"/><rect x="1101" y="124" width="3" height="1" fill="#6a9955" fill-opacity="0.9"/><rect x="1104" y="124" width="1" height="1" fill="#6a9955" fill-opacity="0.55"/><rect x="1105" y="124" width="1" height="1" fill="#6a9955" fill-opacity="0.85"/><rect x="1106" y="124" width="3" height="1" fill="#6a9955" fill-opacity="0.9"/><rect x="1109" y="124" width="1" height="1" fill="#6a9955" fill-opacity="0.55"/><rect x="1110" y="124" width="6" height="1" fill="#6a9955" fill-opacity="0.9"/><rect x="1116" y="124" width="1" height="1" fill="#6a9955" fill-opacity="0.55"/><rect x="1117" y="124" width="2" height="1" fill="#6a9955" fill-opacity="0.9"/><rect x="1119" y="124" width="1" height="1" fill="#6a9955" fill-opacity="0.85"/><rect x="1120" y="124" width="1" height="1" fill="#6a9955" fill-opacity="0.9"/><rect x="1121" y="124" width="1" height="1" fill="#6a9955" fill-opacity="0.85"/><rect x="1122" y="124" width="1" height="1" fill="#6a9955" fill-opacity="0.9"/><rect x="1123" y="124" width="1" height="1" fill="#6a9955" fill-opacity="0.55"/><rect x="1124" y="124" width="2" height="1" fill="#6a9955" fill-opacity="0.85"/><rect x="1076" y="126" width="1" height="1" fill="#6a9955" fill-opacity="0.45"/><rect x="1078" y="126" width="1" height="1" fill="#6a9955" fill-opacity="0.85"/><rect x="1079" y="126" width="2" height="1" fill="#6a9955" fill-opacity="0.9"/><rect x="1081" y="126" width="1" height="1" fill="#6a9955" fill-opacity="0.85"/><rect x="1083" y="126" width="1" height="1" fill="#6a9955" fill-opacity="0.85"/><rect x="1084" y="126" width="3" height="1" fill="#6a9955" fill-opacity="0.9"/><rect x="1087" y="126" width="1" height="1" fill="#6a9955" fill-opacity="0.55"/><rect x="1089" y="126" width="9" height="1" fill="#6a9955" fill-opacity="0.85"/><rect x="1098" y="126" width="1" height="1" fill="#6a9955" fill-opacity="0.55"/><rect x="1099" y="126" width="7" height="1" fill="#6a9955" fill-opacity="0.85"/><rect x="1076" y="128" width="1" height="1" fill="#6a9955" fill-opacity="0.45"/><rect x="1078" y="128" width="1" height="1" fill="#6a9955" fill-opacity="0.85"/><rect x="1079" y="128" width="2" height="1" fill="#6a9955" fill-opacity="0.9"/><rect x="1081" y="128" width="1" height="1" fill="#6a9955" fill-opacity="0.85"/><rect x="1083" y="128" width="1" height="1" fill="#6a9955" fill-opacity="0.9"/><rect x="1084" y="128" width="1" height="1" fill="#6a9955" fill-opacity="0.85"/><rect x="1085" y="128" width="1" height="1" fill="#6a9955" fill-opacity="0.55"/><rect x="1087" y="128" width="8" height="1" fill="#6a9955" fill-opacity="0.85"/><rect x="1095" y="128" width="1" height="1" fill="#6a9955" fill-opacity="0.55"/><rect x="1096" y="128" width="4" height="1" fill="#6a9955" fill-opacity="0.85"/><rect x="1100" y="128" width="1" height="1" fill="#6a9955" fill-opacity="0.55"/><rect x="1101" y="128" width="4" height="1" fill="#6a9955" fill-opacity="0.85"/><rect x="1105" y="128" width="1" height="1" fill="#6a9955" fill-opacity="0.55"/><rect x="1106" y="128" width="4" height="1" fill="#6a9955" fill-opacity="0.85"/><rect x="1110" y="128" width="1" height="1" fill="#6a9955" fill-opacity="0.55"/><rect x="1111" y="128" width="6" height="1" fill="#6a9955" fill-opacity="0.85"/><rect x="1117" y="128" width="2" height="1" fill="#6a9955" fill-opacity="0.9"/><rect x="1119" y="128" width="4" height="1" fill="#6a9955" fill-opacity="0.85"/><rect x="1076" y="130" width="1" height="1" fill="#6a9955" fill-opacity="0.45"/><rect x="1078" y="130" width="1" height="1" fill="#6a9955" fill-opacity="0.85"/><rect x="1079" y="130" width="2" height="1" fill="#6a9955" fill-opacity="0.9"/><rect x="1081" y="130" width="1" height="1" fill="#6a9955" fill-opacity="0.85"/><rect x="1083" y="130" width="1" height="1" fill="#6a9955" fill-opacity="0.85"/><rect x="1084" y="130" width="6" height="1" fill="#6a9955" fill-opacity="0.9"/><rect x="1090" y="130" width="1" height="1" fill="#6a9955" fill-opacity="0.85"/><rect x="1091" y="130" width="3" height="1" fill="#6a9955" fill-opacity="0.9"/><rect x="1094" y="130" width="1" height="1" fill="#6a9955" fill-opacity="0.55"/><rect x="1076" y="132" width="1" height="1" fill="#6a9955" fill-opacity="0.45"/><rect x="1078" y="132" width="1" height="1" fill="#6a9955" fill-opacity="0.85"/><rect x="1079" y="132" width="2" height="1" fill="#6a9955" fill-opacity="0.9"/><rect x="1081" y="132" width="1" height="1" fill="#6a9955" fill-opacity="0.85"/><rect x="1083" y="132" width="3" height="1" fill="#6a9955" fill-opacity="0.9"/><rect x="1086" y="132" width="1" height="1" fill="#6a9955" fill-opacity="0.85"/><rect x="1087" y="132" width="1" height="1" fill="#6a9955" fill-opacity="0.55"/><rect x="1089" y="132" width="3" height="1" fill="#6a9955" fill-opacity="0.85"/><rect x="1092" y="132" width="1" height="1" fill="#6a9955" fill-opacity="0.55"/><rect x="1093" y="132" width="7" height="1" fill="#6a9955" fill-opacity="0.85"/><rect x="1100" y="132" width="1" height="1" fill="#6a9955" fill-opacity="0.55"/><rect x="1101" y="132" width="4" height="1" fill="#6a9955" fill-opacity="0.85"/><rect x="1076" y="134" width="1" height="1" fill="#6a9955" fill-opacity="0.45"/><rect x="1078" y="134" width="1" height="1" fill="#6a9955" fill-opacity="0.85"/><rect x="1079" y="134" width="2" height="1" fill="#6a9955" fill-opacity="0.9"/><rect x="1081" y="134" width="1" height="1" fill="#6a9955" fill-opacity="0.85"/><rect x="1083" y="134" width="1" height="1" fill="#6a9955" fill-opacity="0.85"/><rect x="1084" y="134" width="4" height="1" fill="#6a9955" fill-opacity="0.9"/><rect x="1088" y="134" width="1" height="1" fill="#6a9955" fill-opacity="0.85"/><rect x="1089" y="134" width="1" height="1" fill="#6a9955" fill-opacity="0.55"/><rect x="1091" y="134" width="1" height="1" fill="#6a9955" fill-opacity="0.9"/><rect x="1092" y="134" width="1" height="1" fill="#6a9955" fill-opacity="0.85"/><rect x="1093" y="134" width="5" height="1" fill="#6a9955" fill-opacity="0.9"/><rect x="1098" y="134" width="1" height="1" fill="#6a9955" fill-opacity="0.55"/><rect x="1099" y="134" width="3" height="1" fill="#6a9955" fill-opacity="0.85"/><rect x="1102" y="134" width="1" height="1" fill="#6a9955" fill-opacity="0.55"/><rect x="1103" y="134" width="6" height="1" fill="#6a9955" fill-opacity="0.85"/><rect x="1076" y="136" width="1" height="1" fill="#6a9955" fill-opacity="0.45"/><rect x="1077" y="136" width="1" height="1" fill="#6a9955" fill-opacity="0.85"/><rect x="1075" y="138" width="3" height="1" fill="#6a9955" fill-opacity="0.55"/><rect x="1079" y="138" width="1" height="1" fill="#6a9955" fill-opacity="0.85"/><rect x="1080" y="138" width="1" height="1" fill="#6a9955" fill-opacity="0.55"/><rect x="1082" y="138" width="1" height="1" fill="#6a9955" fill-opacity="0.85"/><rect x="1083" y="138" width="5" height="1" fill="#6a9955" fill-opacity="0.9"/><rect x="1088" y="138" width="1" height="1" fill="#6a9955" fill-opacity="0.85"/><rect x="1089" y="138" width="1" height="1" fill="#6a9955" fill-opacity="0.9"/><rect x="1091" y="138" width="4" height="1" fill="#6a9955" fill-opacity="0.85"/><rect x="1096" y="138" width="1" height="1" fill="#6a9955" fill-opacity="0.55"/><rect x="1098" y="138" width="4" height="1" fill="#6a9955" fill-opacity="0.85"/><rect x="1103" y="138" width="3" height="1" fill="#6a9955" fill-opacity="0.55"/><rect x="1075" y="140" width="1" height="1" fill="#6c9cd4" fill-opacity="0.85"/><rect x="1076" y="140" width="5" height="1" fill="#6c9cd4" fill-opacity="0.9"/><rect x="1081" y="140" width="1" height="1" fill="#6c9cd4" fill-opacity="0.85"/><rect x="1082" y="140" width="1" height="1" fill="#6c9cd4" fill-opacity="0.9"/><rect x="1084" y="140" width="1" height="1" fill="#6c9cd4" fill-opacity="0.85"/><rect x="1085" y="140" width="1" height="1" fill="#6c9cd4" fill-opacity="0.9"/><rect x="1086" y="140" width="2" height="1" fill="#6c9cd4" fill-opacity="0.85"/><rect x="1088" y="140" width="1" height="1" fill="#6c9cd4" fill-opacity="0.9"/><rect x="1090" y="140" width="1" height="1" fill="#d4d4d4" fill-opacity="0.9"/><rect x="1091" y="140" width="1" height="1" fill="#d4d4d4" fill-opacity="0.85"/><rect x="1092" y="140" width="5" height="1" fill="#d4d4d4" fill-opacity="0.9"/><rect x="1097" y="140" width="1" height="1" fill="#d4d4d4" fill-opacity="0.55"/><rect x="1098" y="140" width="3" height="1" fill="#d4d4d4" fill-opacity="0.85"/><rect x="1101" y="140" width="1" height="1" fill="#d4d4d4" fill-opacity="0.55"/><rect x="1102" y="140" width="6" height="1" fill="#d4d4d4" fill-opacity="0.85"/><rect x="1108" y="140" width="1" height="1" fill="#d4d4d4" fill-opacity="0.55"/><rect x="1075" y="144" width="3" height="1" fill="#6a9955" fill-opacity="0.55"/><rect x="1079" y="144" width="1" height="1" fill="#6a9955" fill-opacity="0.85"/><rect x="1080" y="144" width="1" height="1" fill="#6a9955" fill-opacity="0.55"/><rect x="1082" y="144" width="10" height="1" fill="#6a9955" fill-opacity="0.85"/><rect x="1093" y="144" width="1" height="1" fill="#6a9955" fill-opacity="0.55"/><rect x="1095" y="144" width="4" height="1" fill="#6a9955" fill-opacity="0.85"/><rect x="1100" y="144" width="3" height="1" fill="#6a9955" fill-opacity="0.55"/><rect x="1075" y="146" width="6" height="1" fill="#6c9cd4" fill-opacity="0.85"/><rect x="1082" y="146" width="4" height="1" fill="#6c9cd4" fill-opacity="0.85"/><rect x="1087" y="146" width="1" height="1" fill="#d4d4d4" fill-opacity="0.9"/><rect x="1088" y="146" width="1" height="1" fill="#d4d4d4" fill-opacity="0.85"/><rect x="1089" y="146" width="5" height="1" fill="#d4d4d4" fill-opacity="0.9"/><rect x="1094" y="146" width="1" height="1" fill="#d4d4d4" fill-opacity="0.55"/><rect x="1095" y="146" width="3" height="1" fill="#d4d4d4" fill-opacity="0.85"/><rect x="1098" y="146" width="1" height="1" fill="#d4d4d4" fill-opacity="0.55"/><rect x="1099" y="146" width="6" height="1" fill="#d4d4d4" fill-opacity="0.85"/><rect x="1106" y="146" width="1" height="1" fill="#d4d4d4" fill-opacity="0.85"/><rect x="1079" y="148" width="1" height="1" fill="#d4d4d4" fill-opacity="0.9"/><rect x="1080" y="148" width="1" height="1" fill="#d4d4d4" fill-opacity="0.85"/><rect x="1081" y="148" width="1" height="1" fill="#d4d4d4" fill-opacity="0.9"/><rect x="1082" y="148" width="1" height="1" fill="#d4d4d4" fill-opacity="0.55"/><rect x="1083" y="148" width="1" height="1" fill="#d4d4d4" fill-opacity="0.85"/><rect x="1084" y="148" width="1" height="1" fill="#d4d4d4" fill-opacity="0.9"/><rect x="1085" y="148" width="1" height="1" fill="#d4d4d4" fill-opacity="0.85"/><rect x="1086" y="148" width="1" height="1" fill="#d4d4d4" fill-opacity="0.9"/><rect x="1087" y="148" width="1" height="1" fill="#d4d4d4" fill-opacity="0.85"/><rect x="1088" y="148" width="1" height="1" fill="#d4d4d4" fill-opacity="0.55"/><rect x="1089" y="148" width="1" height="1" fill="#d4d4d4" fill-opacity="0.9"/><rect x="1090" y="148" width="1" height="1" fill="#d4d4d4" fill-opacity="0.85"/><rect x="1079" y="150" width="1" height="1" fill="#d4d4d4" fill-opacity="0.55"/><rect x="1081" y="150" width="1" height="1" fill="#d4d4d4" fill-opacity="0.9"/><rect x="1082" y="150" width="1" height="1" fill="#d4d4d4" fill-opacity="0.85"/><rect x="1083" y="150" width="1" height="1" fill="#d4d4d4" fill-opacity="0.9"/><rect x="1084" y="150" width="1" height="1" fill="#d4d4d4" fill-opacity="0.55"/><rect x="1085" y="150" width="4" height="1" fill="#d4d4d4" fill-opacity="0.9"/><rect x="1089" y="150" width="1" height="1" fill="#d4d4d4" fill-opacity="0.85"/><rect x="1090" y="150" width="1" height="1" fill="#d4d4d4" fill-opacity="0.9"/><rect x="1091" y="150" width="1" height="1" fill="#d4d4d4" fill-opacity="0.55"/><rect x="1092" y="150" width="1" height="1" fill="#d4d4d4" fill-opacity="0.85"/><rect x="1093" y="150" width="3" height="1" fill="#d4d4d4" fill-opacity="0.9"/><rect x="1079" y="152" width="1" height="1" fill="#d4d4d4" fill-opacity="0.55"/><rect x="1081" y="152" width="1" height="1" fill="#d4d4d4" fill-opacity="0.9"/><rect x="1082" y="152" width="1" height="1" fill="#d4d4d4" fill-opacity="0.85"/><rect x="1083" y="152" width="1" height="1" fill="#d4d4d4" fill-opacity="0.9"/><rect x="1084" y="152" width="1" height="1" fill="#d4d4d4" fill-opacity="0.55"/><rect x="1085" y="152" width="6" height="1" fill="#d4d4d4" fill-opacity="0.9"/><rect x="1091" y="152" width="1" height="1" fill="#d4d4d4" fill-opacity="0.55"/><rect x="1092" y="152" width="3" height="1" fill="#d4d4d4" fill-opacity="0.9"/><rect x="1095" y="152" width="1" height="1" fill="#d4d4d4" fill-opacity="0.85"/><rect x="1096" y="152" width="2" height="1" fill="#d4d4d4" fill-opacity="0.9"/><rect x="1079" y="154" width="1" height="1" fill="#d4d4d4" fill-opacity="0.55"/><rect x="1081" y="154" width="1" height="1" fill="#d4d4d4" fill-opacity="0.9"/><rect x="1082" y="154" width="1" height="1" fill="#d4d4d4" fill-opacity="0.85"/><rect x="1083" y="154" width="1" height="1" fill="#d4d4d4" fill-opacity="0.9"/><rect x="1084" y="154" width="1" height="1" fill="#d4d4d4" fill-opacity="0.55"/><rect x="1085" y="154" width="6" height="1" fill="#d4d4d4" fill-opacity="0.9"/><rect x="1091" y="154" width="1" height="1" fill="#d4d4d4" fill-opacity="0.55"/><rect x="1092" y="154" width="2" height="1" fill="#d4d4d4" fill-opacity="0.9"/><rect x="1094" y="154" width="1" height="1" fill="#d4d4d4" fill-opacity="0.85"/><rect x="1095" y="154" width="1" height="1" fill="#d4d4d4" fill-opacity="0.9"/><rect x="1096" y="154" width="1" height="1" fill="#d4d4d4" fill-opacity="0.85"/><rect x="1097" y="154" width="1" height="1" fill="#d4d4d4" fill-opacity="0.9"/><rect x="1079" y="156" width="1" height="1" fill="#d4d4d4" fill-opacity="0.55"/><rect x="1081" y="156" width="2" height="1" fill="#d4d4d4" fill-opacity="0.9"/><rect x="1083" y="156" width="1" height="1" fill="#d4d4d4" fill-opacity="0.85"/><rect x="1084" y="156" width="2" height="1" fill="#d4d4d4" fill-opacity="0.9"/><rect x="1086" y="156" width="1" height="1" fill="#d4d4d4" fill-opacity="0.55"/><rect x="1087" y="156" width="1" height="1" fill="#d4d4d4" fill-opacity="0.9"/><rect x="1088" y="156" width="1" height="1" fill="#d4d4d4" fill-opacity="0.85"/><rect x="1079" y="158" width="1" height="1" fill="#d4d4d4" fill-opacity="0.55"/><rect x="1081" y="158" width="1" height="1" fill="#d4d4d4" fill-opacity="0.9"/><rect x="1082" y="158" width="1" height="1" fill="#d4d4d4" fill-opacity="0.85"/><rect x="1083" y="158" width="2" height="1" fill="#d4d4d4" fill-opacity="0.9"/><rect x="1085" y="158" width="1" height="1" fill="#d4d4d4" fill-opacity="0.55"/><rect x="1086" y="158" width="1" height="1" fill="#d4d4d4" fill-opacity="0.85"/><rect x="1087" y="158" width="1" height="1" fill="#d4d4d4" fill-opacity="0.9"/><rect x="1088" y="158" width="1" height="1" fill="#d4d4d4" fill-opacity="0.55"/><rect x="1089" y="158" width="3" height="1" fill="#d4d4d4" fill-opacity="0.9"/><rect x="1092" y="158" width="1" height="1" fill="#d4d4d4" fill-opacity="0.85"/><rect x="1093" y="158" width="1" height="1" fill="#d4d4d4" fill-opacity="0.9"/><rect x="1079" y="160" width="1" height="1" fill="#d4d4d4" fill-opacity="0.55"/><rect x="1081" y="160" width="2" height="1" fill="#d4d4d4" fill-opacity="0.9"/><rect x="1083" y="160" width="2" height="1" fill="#d4d4d4" fill-opacity="0.85"/><rect x="1085" y="160" width="1" height="1" fill="#d4d4d4" fill-opacity="0.55"/><rect x="1086" y="160" width="1" height="1" fill="#d4d4d4" fill-opacity="0.85"/><rect x="1087" y="160" width="1" height="1" fill="#d4d4d4" fill-opacity="0.9"/><rect x="1088" y="160" width="1" height="1" fill="#d4d4d4" fill-opacity="0.55"/><rect x="1089" y="160" width="3" height="1" fill="#d4d4d4" fill-opacity="0.9"/><rect x="1092" y="160" width="1" height="1" fill="#d4d4d4" fill-opacity="0.85"/><rect x="1093" y="160" width="1" height="1" fill="#d4d4d4" fill-opacity="0.9"/><rect x="1079" y="162" width="1" height="1" fill="#d4d4d4" fill-opacity="0.55"/><rect x="1081" y="162" width="2" height="1" fill="#d4d4d4" fill-opacity="0.9"/><rect x="1083" y="162" width="1" height="1" fill="#d4d4d4" fill-opacity="0.85"/><rect x="1084" y="162" width="2" height="1" fill="#d4d4d4" fill-opacity="0.9"/><rect x="1086" y="162" width="1" height="1" fill="#d4d4d4" fill-opacity="0.55"/><rect x="1087" y="162" width="5" height="1" fill="#d4d4d4" fill-opacity="0.9"/><rect x="1092" y="162" width="1" height="1" fill="#d4d4d4" fill-opacity="0.85"/><rect x="1079" y="164" width="1" height="1" fill="#d4d4d4" fill-opacity="0.55"/><rect x="1081" y="164" width="2" height="1" fill="#d4d4d4" fill-opacity="0.9"/><rect x="1083" y="164" width="1" height="1" fill="#d4d4d4" fill-opacity="0.85"/><rect x="1084" y="164" width="2" height="1" fill="#d4d4d4" fill-opacity="0.9"/><rect x="1086" y="164" width="1" height="1" fill="#d4d4d4" fill-opacity="0.55"/><rect x="1087" y="164" width="1" height="1" fill="#d4d4d4" fill-opacity="0.85"/><rect x="1088" y="164" width="3" height="1" fill="#d4d4d4" fill-opacity="0.9"/><rect x="1075" y="166" width="1" height="1" fill="#d4d4d4" fill-opacity="0.85"/><rect x="1075" y="168" width="6" height="1" fill="#6c9cd4" fill-opacity="0.85"/><rect x="1082" y="168" width="8" height="1" fill="#6c9cd4" fill-opacity="0.85"/><rect x="1079" y="170" width="1" height="1" fill="#d4d4d4" fill-opacity="0.85"/><rect x="1080" y="170" width="1" height="1" fill="#d4d4d4" fill-opacity="0.9"/><rect x="1081" y="170" width="1" height="1" fill="#d4d4d4" fill-opacity="0.85"/><rect x="1082" y="170" width="1" height="1" fill="#d4d4d4" fill-opacity="0.9"/><rect x="1083" y="170" width="1" height="1" fill="#d4d4d4" fill-opacity="0.55"/><rect x="1084" y="170" width="3" height="1" fill="#d4d4d4" fill-opacity="0.9"/><rect x="1087" y="170" width="2" height="1" fill="#d4d4d4" fill-opacity="0.85"/><rect x="1089" y="170" width="4" height="1" fill="#d4d4d4" fill-opacity="0.9"/><rect x="1093" y="170" width="1" height="1" fill="#d4d4d4" fill-opacity="0.85"/><rect x="1094" y="170" width="1" height="1" fill="#d4d4d4" fill-opacity="0.55"/><rect x="1095" y="170" width="2" height="1" fill="#d4d4d4" fill-opacity="0.9"/><rect x="1097" y="170" width="2" height="1" fill="#d4d4d4" fill-opacity="0.85"/><rect x="1099" y="170" width="6" height="1" fill="#d4d4d4" fill-opacity="0.9"/><rect x="1105" y="170" width="1" height="1" fill="#d4d4d4" fill-opacity="0.85"/><rect x="1106" y="170" width="1" height="1" fill="#d4d4d4" fill-opacity="0.55"/><rect x="1108" y="170" width="6" height="1" fill="#9b8fd4" fill-opacity="0.9"/><rect x="1114" y="170" width="1" height="1" fill="#9b8fd4" fill-opacity="0.85"/><rect x="1115" y="170" width="1" height="1" fill="#9b8fd4" fill-opacity="0.55"/><rect x="1116" y="170" width="1" height="1" fill="#9b8fd4" fill-opacity="0.85"/><rect x="1117" y="170" width="4" height="1" fill="#9b8fd4" fill-opacity="0.9"/><rect x="1121" y="170" width="1" height="1" fill="#9b8fd4" fill-opacity="0.85"/><rect x="1122" y="170" width="3" height="1" fill="#9b8fd4" fill-opacity="0.9"/><rect x="1125" y="170" width="3" height="1" fill="#d4d4d4" fill-opacity="0.85"/><rect x="1129" y="170" width="2" height="1" fill="#6c9cd4" fill-opacity="0.85"/><rect x="1132" y="170" width="1" height="1" fill="#d4d4d4" fill-opacity="0.9"/><rect x="1133" y="170" width="1" height="1" fill="#d4d4d4" fill-opacity="0.85"/><rect x="1134" y="170" width="1" height="1" fill="#d4d4d4" fill-opacity="0.9"/><rect x="1135" y="170" width="1" height="1" fill="#d4d4d4" fill-opacity="0.55"/><rect x="1136" y="170" width="1" height="1" fill="#d4d4d4" fill-opacity="0.85"/><rect x="1137" y="170" width="1" height="1" fill="#d4d4d4" fill-opacity="0.9"/><rect x="1138" y="170" width="1" height="1" fill="#d4d4d4" fill-opacity="0.85"/><rect x="1139" y="170" width="1" height="1" fill="#d4d4d4" fill-opacity="0.9"/><rect x="1140" y="170" width="1" height="1" fill="#d4d4d4" fill-opacity="0.85"/><rect x="1141" y="170" width="1" height="1" fill="#d4d4d4" fill-opacity="0.55"/><rect x="1142" y="170" width="1" height="1" fill="#d4d4d4" fill-opacity="0.9"/><rect x="1143" y="170" width="1" height="1" fill="#d4d4d4" fill-opacity="0.85"/><rect x="1079" y="172" width="1" height="1" fill="#d4d4d4" fill-opacity="0.55"/><rect x="1081" y="172" width="6" height="1" fill="#9b8fd4" fill-opacity="0.9"/><rect x="1087" y="172" width="1" height="1" fill="#9b8fd4" fill-opacity="0.85"/><rect x="1088" y="172" width="1" height="1" fill="#9b8fd4" fill-opacity="0.55"/><rect x="1089" y="172" width="1" height="1" fill="#9b8fd4" fill-opacity="0.85"/><rect x="1090" y="172" width="4" height="1" fill="#9b8fd4" fill-opacity="0.9"/><rect x="1094" y="172" width="1" height="1" fill="#9b8fd4" fill-opacity="0.85"/><rect x="1095" y="172" width="3" height="1" fill="#9b8fd4" fill-opacity="0.9"/><rect x="1098" y="172" width="2" height="1" fill="#d4d4d4" fill-opacity="0.85"/><rect x="1101" y="172" width="2" height="1" fill="#6c9cd4" fill-opacity="0.85"/><rect x="1104" y="172" width="1" height="1" fill="#d4d4d4" fill-opacity="0.9"/><rect x="1105" y="172" width="1" height="1" fill="#d4d4d4" fill-opacity="0.85"/><rect x="1106" y="172" width="1" height="1" fill="#d4d4d4" fill-opacity="0.9"/><rect x="1107" y="172" width="1" height="1" fill="#d4d4d4" fill-opacity="0.55"/><rect x="1108" y="172" width="4" height="1" fill="#d4d4d4" fill-opacity="0.9"/><rect x="1112" y="172" width="1" height="1" fill="#d4d4d4" fill-opacity="0.85"/><rect x="1113" y="172" width="1" height="1" fill="#d4d4d4" fill-opacity="0.9"/><rect x="1114" y="172" width="1" height="1" fill="#d4d4d4" fill-opacity="0.55"/><rect x="1115" y="172" width="1" height="1" fill="#d4d4d4" fill-opacity="0.85"/><rect x="1116" y="172" width="3" height="1" fill="#d4d4d4" fill-opacity="0.9"/><rect x="1079" y="174" width="1" height="1" fill="#d4d4d4" fill-opacity="0.55"/><rect x="1081" y="174" width="2" height="1" fill="#b28af0" fill-opacity="0.85"/><rect x="1083" y="174" width="2" height="1" fill="#b28af0" fill-opacity="0.9"/><rect x="1085" y="174" width="1" height="1" fill="#b28af0" fill-opacity="0.85"/><rect x="1086" y="174" width="2" height="1" fill="#b28af0" fill-opacity="0.9"/><rect x="1088" y="174" width="1" height="1" fill="#b28af0" fill-opacity="0.85"/><rect x="1090" y="174" width="2" height="1" fill="#6c9cd4" fill-opacity="0.85"/><rect x="1093" y="174" width="1" height="1" fill="#d4d4d4" fill-opacity="0.9"/><rect x="1094" y="174" width="1" height="1" fill="#d4d4d4" fill-opacity="0.85"/><rect x="1095" y="174" width="1" height="1" fill="#d4d4d4" fill-opacity="0.9"/><rect x="1096" y="174" width="1" height="1" fill="#d4d4d4" fill-opacity="0.55"/><rect x="1097" y="174" width="6" height="1" fill="#d4d4d4" fill-opacity="0.9"/><rect x="1103" y="174" width="1" height="1" fill="#d4d4d4" fill-opacity="0.55"/><rect x="1104" y="174" width="3" height="1" fill="#d4d4d4" fill-opacity="0.9"/><rect x="1107" y="174" width="1" height="1" fill="#d4d4d4" fill-opacity="0.85"/><rect x="1108" y="174" width="2" height="1" fill="#d4d4d4" fill-opacity="0.9"/><rect x="1079" y="176" width="1" height="1" fill="#d4d4d4" fill-opacity="0.55"/><rect x="1081" y="176" width="4" height="1" fill="#b28af0" fill-opacity="0.85"/><rect x="1085" y="176" width="1" height="1" fill="#b28af0" fill-opacity="0.55"/><rect x="1086" y="176" width="7" height="1" fill="#b28af0" fill-opacity="0.85"/><rect x="1094" y="176" width="2" height="1" fill="#6c9cd4" fill-opacity="0.85"/><rect x="1097" y="176" width="1" height="1" fill="#d4d4d4" fill-opacity="0.9"/><rect x="1098" y="176" width="1" height="1" fill="#d4d4d4" fill-opacity="0.85"/><rect x="1099" y="176" width="1" height="1" fill="#d4d4d4" fill-opacity="0.9"/><rect x="1100" y="176" width="1" height="1" fill="#d4d4d4" fill-opacity="0.55"/><rect x="1101" y="176" width="6" height="1" fill="#d4d4d4" fill-opacity="0.9"/><rect x="1107" y="176" width="1" height="1" fill="#d4d4d4" fill-opacity="0.55"/><rect x="1108" y="176" width="2" height="1" fill="#d4d4d4" fill-opacity="0.9"/><rect x="1110" y="176" width="1" height="1" fill="#d4d4d4" fill-opacity="0.85"/><rect x="1111" y="176" width="1" height="1" fill="#d4d4d4" fill-opacity="0.9"/><rect x="1112" y="176" width="1" height="1" fill="#d4d4d4" fill-opacity="0.85"/><rect x="1113" y="176" width="1" height="1" fill="#d4d4d4" fill-opacity="0.9"/><rect x="1079" y="178" width="1" height="1" fill="#d4d4d4" fill-opacity="0.55"/><rect x="1081" y="178" width="2" height="1" fill="#d4d4d4" fill-opacity="0.9"/><rect x="1083" y="178" width="1" height="1" fill="#d4d4d4" fill-opacity="0.85"/><rect x="1084" y="178" width="2" height="1" fill="#d4d4d4" fill-opacity="0.9"/><rect x="1086" y="178" width="1" height="1" fill="#d4d4d4" fill-opacity="0.55"/><rect x="1087" y="178" width="1" height="1" fill="#d4d4d4" fill-opacity="0.9"/><rect x="1088" y="178" width="1" height="1" fill="#d4d4d4" fill-opacity="0.85"/><rect x="1090" y="178" width="2" height="1" fill="#6c9cd4" fill-opacity="0.85"/><rect x="1093" y="178" width="2" height="1" fill="#d4d4d4" fill-opacity="0.9"/><rect x="1095" y="178" width="1" height="1" fill="#d4d4d4" fill-opacity="0.85"/><rect x="1096" y="178" width="2" height="1" fill="#d4d4d4" fill-opacity="0.9"/><rect x="1098" y="178" width="1" height="1" fill="#d4d4d4" fill-opacity="0.55"/><rect x="1099" y="178" width="1" height="1" fill="#d4d4d4" fill-opacity="0.9"/><rect x="1100" y="178" width="1" height="1" fill="#d4d4d4" fill-opacity="0.85"/><rect x="1079" y="180" width="1" height="1" fill="#d4d4d4" fill-opacity="0.55"/><rect x="1081" y="180" width="1" height="1" fill="#d4d4d4" fill-opacity="0.9"/><rect x="1082" y="180" width="1" height="1" fill="#d4d4d4" fill-opacity="0.85"/><rect x="1083" y="180" width="2" height="1" fill="#d4d4d4" fill-opacity="0.9"/><rect x="1085" y="180" width="1" height="1" fill="#d4d4d4" fill-opacity="0.55"/><rect x="1086" y="180" width="1" height="1" fill="#d4d4d4" fill-opacity="0.85"/><rect x="1087" y="180" width="1" height="1" fill="#d4d4d4" fill-opacity="0.9"/><rect x="1088" y="180" width="1" height="1" fill="#d4d4d4" fill-opacity="0.55"/><rect x="1089" y="180" width="3" height="1" fill="#d4d4d4" fill-opacity="0.9"/><rect x="1092" y="180" width="1" height="1" fill="#d4d4d4" fill-opacity="0.85"/><rect x="1093" y="180" width="1" height="1" fill="#d4d4d4" fill-opacity="0.9"/><rect x="1095" y="180" width="2" height="1" fill="#6c9cd4" fill-opacity="0.85"/><rect x="1098" y="180" width="1" height="1" fill="#d4d4d4" fill-opacity="0.9"/><rect x="1099" y="180" width="1" height="1" fill="#d4d4d4" fill-opacity="0.85"/><rect x="1100" y="180" width="2" height="1" fill="#d4d4d4" fill-opacity="0.9"/><rect x="1102" y="180" width="1" height="1" fill="#d4d4d4" fill-opacity="0.55"/><rect x="1103" y="180" width="1" height="1" fill="#d4d4d4" fill-opacity="0.85"/><rect x="1104" y="180" width="1" height="1" fill="#d4d4d4" fill-opacity="0.9"/><rect x="1105" y="180" width="1" height="1" fill="#d4d4d4" fill-opacity="0.55"/><rect x="1106" y="180" width="3" height="1" fill="#d4d4d4" fill-opacity="0.9"/><rect x="1109" y="180" width="1" height="1" fill="#d4d4d4" fill-opacity="0.85"/><rect x="1110" y="180" width="1" height="1" fill="#d4d4d4" fill-opacity="0.9"/><rect x="1079" y="182" width="1" height="1" fill="#d4d4d4" fill-opacity="0.55"/><rect x="1081" y="182" width="2" height="1" fill="#d4d4d4" fill-opacity="0.9"/><rect x="1083" y="182" width="2" height="1" fill="#d4d4d4" fill-opacity="0.85"/><rect x="1085" y="182" width="1" height="1" fill="#d4d4d4" fill-opacity="0.55"/><rect x="1086" y="182" width="1" height="1" fill="#d4d4d4" fill-opacity="0.85"/><rect x="1087" y="182" width="1" height="1" fill="#d4d4d4" fill-opacity="0.9"/><rect x="1088" y="182" width="1" height="1" fill="#d4d4d4" fill-opacity="0.55"/><rect x="1089" y="182" width="3" height="1" fill="#d4d4d4" fill-opacity="0.9"/><rect x="1092" y="182" width="1" height="1" fill="#d4d4d4" fill-opacity="0.85"/><rect x="1093" y="182" width="1" height="1" fill="#d4d4d4" fill-opacity="0.9"/><rect x="1095" y="182" width="2" height="1" fill="#6c9cd4" fill-opacity="0.85"/><rect x="1098" y="182" width="2" height="1" fill="#d4d4d4" fill-opacity="0.9"/><rect x="1100" y="182" width="2" height="1" fill="#d4d4d4" fill-opacity="0.85"/><rect x="1102" y="182" width="1" height="1" fill="#d4d4d4" fill-opacity="0.55"/><rect x="1103" y="182" width="1" height="1" fill="#d4d4d4" fill-opacity="0.85"/><rect x="1104" y="182" width="1" height="1" fill="#d4d4d4" fill-opacity="0.9"/><rect x="1105" y="182" width="1" height="1" fill="#d4d4d4" fill-opacity="0.55"/><rect x="1106" y="182" width="3" height="1" fill="#d4d4d4" fill-opacity="0.9"/><rect x="1109" y="182" width="1" height="1" fill="#d4d4d4" fill-opacity="0.85"/><rect x="1110" y="182" width="1" height="1" fill="#d4d4d4" fill-opacity="0.9"/><rect x="1079" y="184" width="1" height="1" fill="#d4d4d4" fill-opacity="0.55"/><rect x="1081" y="184" width="2" height="1" fill="#d4d4d4" fill-opacity="0.9"/><rect x="1083" y="184" width="1" height="1" fill="#d4d4d4" fill-opacity="0.85"/><rect x="1084" y="184" width="2" height="1" fill="#d4d4d4" fill-opacity="0.9"/><rect x="1086" y="184" width="1" height="1" fill="#d4d4d4" fill-opacity="0.55"/><rect x="1087" y="184" width="5" height="1" fill="#d4d4d4" fill-opacity="0.9"/><rect x="1092" y="184" width="1" height="1" fill="#d4d4d4" fill-opacity="0.85"/><rect x="1094" y="184" width="2" height="1" fill="#6c9cd4" fill-opacity="0.85"/><rect x="1097" y="184" width="2" height="1" fill="#d4d4d4" fill-opacity="0.9"/><rect x="1099" y="184" width="1" height="1" fill="#d4d4d4" fill-opacity="0.85"/><rect x="1100" y="184" width="2" height="1" fill="#d4d4d4" fill-opacity="0.9"/><rect x="1102" y="184" width="1" height="1" fill="#d4d4d4" fill-opacity="0.55"/><rect x="1103" y="184" width="5" height="1" fill="#d4d4d4" fill-opacity="0.9"/><rect x="1108" y="184" width="1" height="1" fill="#d4d4d4" fill-opacity="0.85"/><rect x="1079" y="186" width="1" height="1" fill="#d4d4d4" fill-opacity="0.55"/><rect x="1081" y="186" width="2" height="1" fill="#d4d4d4" fill-opacity="0.9"/><rect x="1083" y="186" width="1" height="1" fill="#d4d4d4" fill-opacity="0.85"/><rect x="1084" y="186" width="2" height="1" fill="#d4d4d4" fill-opacity="0.9"/><rect x="1086" y="186" width="1" height="1" fill="#d4d4d4" fill-opacity="0.55"/><rect x="1087" y="186" width="1" height="1" fill="#d4d4d4" fill-opacity="0.85"/><rect x="1088" y="186" width="3" height="1" fill="#d4d4d4" fill-opacity="0.9"/><rect x="1092" y="186" width="2" height="1" fill="#6c9cd4" fill-opacity="0.85"/><rect x="1095" y="186" width="2" height="1" fill="#d4d4d4" fill-opacity="0.9"/><rect x="1097" y="186" width="1" height="1" fill="#d4d4d4" fill-opacity="0.85"/><rect x="1098" y="186" width="2" height="1" fill="#d4d4d4" fill-opacity="0.9"/><rect x="1100" y="186" width="1" height="1" fill="#d4d4d4" fill-opacity="0.55"/><rect x="1101" y="186" width="1" height="1" fill="#d4d4d4" fill-opacity="0.85"/><rect x="1102" y="186" width="3" height="1" fill="#d4d4d4" fill-opacity="0.9"/><rect x="1075" y="188" width="4" height="1" fill="#6c9cd4" fill-opacity="0.85"/><rect x="1079" y="190" width="3" height="1" fill="#d4d4d4" fill-opacity="0.9"/><rect x="1082" y="190" width="1" height="1" fill="#d4d4d4" fill-opacity="0.55"/><rect x="1083" y="190" width="3" height="1" fill="#d4d4d4" fill-opacity="0.85"/><rect x="1086" y="190" width="1" height="1" fill="#d4d4d4" fill-opacity="0.55"/><rect x="1087" y="190" width="6" height="1" fill="#d4d4d4" fill-opacity="0.85"/><rect x="1094" y="190" width="3" height="1" fill="#d4d4d4" fill-opacity="0.9"/><rect x="1097" y="190" width="1" height="1" fill="#d4d4d4" fill-opacity="0.55"/><rect x="1098" y="190" width="2" height="1" fill="#d4d4d4" fill-opacity="0.9"/><rect x="1100" y="190" width="1" height="1" fill="#d4d4d4" fill-opacity="0.85"/><rect x="1101" y="190" width="1" height="1" fill="#d4d4d4" fill-opacity="0.9"/><rect x="1102" y="190" width="1" height="1" fill="#d4d4d4" fill-opacity="0.85"/><rect x="1103" y="190" width="1" height="1" fill="#d4d4d4" fill-opacity="0.9"/><rect x="1075" y="192" width="1" height="1" fill="#d4d4d4" fill-opacity="0.55"/></svg>
<div class="sbline"></div>
<div class="sbthumb"></div>
<div class="sbedge"></div>
<div class="sbcur"></div>
</div>
</body>
</html>
